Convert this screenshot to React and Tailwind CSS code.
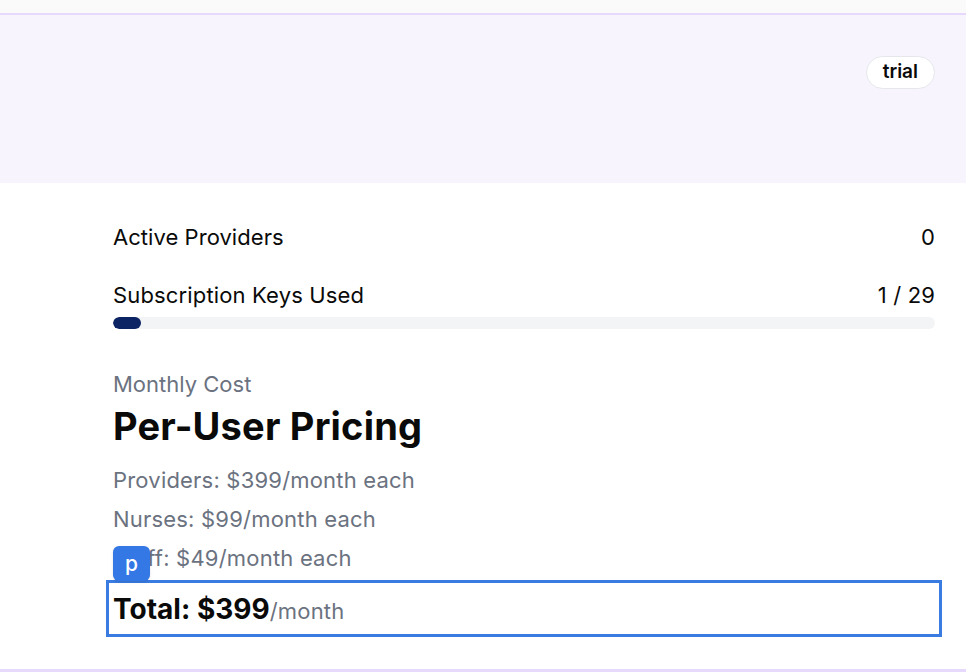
import React from "react";

const rows = [
  "Providers: $399/month each",
  "Nurses: $99/month each",
  "Staff: $49/month each",
];

export default function App() {
  const used = 1;
  const total = 29;
  return (
    <div className="min-h-[672px] bg-white font-['Inter','Liberation_Sans',sans-serif] text-[#0a0a0a]">
      <div className="h-[13px] bg-[#fafafa]" />
      <div className="border-t-2 border-b-4 border-[#e6d9fb] bg-white">
        {/* header */}
        <div className="h-[168px] bg-[#f7f4fe] pt-[41px] pr-[31px] flex justify-end items-start">
          <span className="h-[33px] px-4 flex items-center rounded-full border border-[#e5e7eb] bg-white text-[19px] font-semibold">
            trial
          </span>
        </div>

        {/* body */}
        <div className="pl-[113px] pr-[31px] pt-[40px] pb-[39px]">
          <div className="flex justify-between text-[22px] leading-[28px] tracking-[0.05px]">
            <span>Active Providers</span>
            <span>0</span>
          </div>

          <div className="mt-[30px]">
            <div className="flex justify-between text-[22px] leading-[28px] tracking-[0.15px]">
              <span>Subscription Keys Used</span>
              <span>
                {used} / {total}
              </span>
            </div>
            <div className="mt-2 h-3 rounded-full bg-[#f3f4f6] overflow-hidden">
              <div
                className="h-full rounded-full bg-[#0c2463]"
                style={{ width: `${(used / total) * 100}%` }}
              />
            </div>
          </div>

          <div className="mt-[41px]">
            <p className="text-[22px] leading-[28px] text-[#6b7280]">Monthly Cost</p>
            <h2 className="mt-2 text-[38px] leading-[40px] font-bold tracking-[0.2px]">Per-User Pricing</h2>
            <div className="mt-5 flex flex-col gap-[11px]">
              {rows.map((r) => (
                <p key={r} className="text-[22px] leading-[28px] tracking-[0.2px] text-[#6b7280]">
                  {r}
                </p>
              ))}
            </div>
            <div className="relative mt-[15px] h-[43px] flex items-center outline-[3px] outline-solid outline-[#3a7be2] outline-offset-[4px]">
              <span className="absolute left-0 top-[-41px] w-[37px] h-[35px] rounded-md bg-[#3478e6] text-white text-[21px] font-medium flex items-center justify-center shadow-sm">
                p
              </span>
              <span className="text-[28px] leading-[32px] font-bold">Total: $399</span>
              <span className="text-[22px] leading-[28px] text-[#6b7280] mt-1 tracking-[0.2px]">/month</span>
            </div>
          </div>
        </div>
      </div>
    </div>
  );
}
